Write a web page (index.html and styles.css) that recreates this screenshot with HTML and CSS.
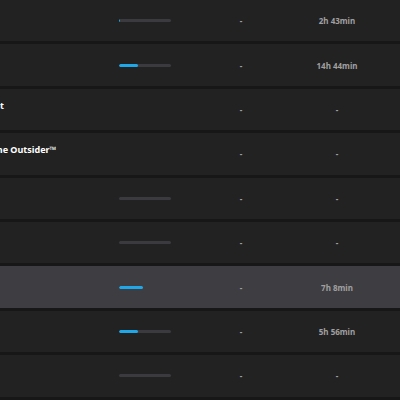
FILE: index.html
```html
<!DOCTYPE html>
<html lang="en">
<head>
  <meta charset="UTF-8" />
  <meta name="viewport" content="width=device-width, initial-scale=1" />
  <title>Library - Playtime</title>
  <link rel="stylesheet" href="styles.css">
</head>
<body>

  <div class="list">
    <div class="row">
      <div class="title"></div>
      <div class="bar-cell"><div class="track"><div class="fill" style="width: 2%"></div></div></div>
      <div class="dash">-</div>
      <div class="time">2h 43min</div>
    </div>

    <div class="row">
      <div class="title"></div>
      <div class="bar-cell"><div class="track"><div class="fill" style="width: 37%"></div></div></div>
      <div class="dash">-</div>
      <div class="time">14h 44min</div>
    </div>

    <div class="row">
      <div class="title"><span class="name">Ghost Recon® Breakpoint</span></div>
      <div class="bar-cell"></div>
      <div class="dash">-</div>
      <div class="time">-</div>
    </div>

    <div class="row">
      <div class="title"><span class="name">Dishonored®: Death of the Outsider™</span></div>
      <div class="bar-cell"></div>
      <div class="dash">-</div>
      <div class="time">-</div>
    </div>

    <div class="row">
      <div class="title"></div>
      <div class="bar-cell"><div class="track"><div class="fill" style="width: 0%"></div></div></div>
      <div class="dash">-</div>
      <div class="time">-</div>
    </div>

    <div class="row">
      <div class="title"></div>
      <div class="bar-cell"><div class="track"><div class="fill" style="width: 0%"></div></div></div>
      <div class="dash">-</div>
      <div class="time">-</div>
    </div>

    <div class="row active">
      <div class="title"></div>
      <div class="bar-cell"><div class="track"><div class="fill" style="width: 46%"></div></div></div>
      <div class="dash">-</div>
      <div class="time">7h 8min</div>
    </div>

    <div class="row">
      <div class="title"></div>
      <div class="bar-cell"><div class="track"><div class="fill" style="width: 37%"></div></div></div>
      <div class="dash">-</div>
      <div class="time">5h 56min</div>
    </div>

    <div class="row">
      <div class="title"></div>
      <div class="bar-cell"><div class="track"><div class="fill" style="width: 0%"></div></div></div>
      <div class="dash">-</div>
      <div class="time">-</div>
    </div>
  </div>

</body>
</html>
```

FILE: styles.css
```css
body {
  margin: 0;
  background: #171717;
  font-family: "Noto Sans", Arial, sans-serif;
  overflow: hidden;
  width: 400px;
  height: 400px;
}

.list {
  margin-left: -120px;
  width: 560px;
  display: flex;
  flex-direction: column;
  gap: 3px;
}

.row {
  height: 41.4px;
  background: #222222;
  display: grid;
  grid-template-columns: 239px 72px 100px 92px 1fr;
  align-items: center;
}

.row.active {
  background: #3e3d42;
}

.title {
  align-self: stretch;
  display: flex;
  align-items: center;
  padding-bottom: 8px;
  box-sizing: border-box;
  white-space: nowrap;
}

.name {
  color: #ffffff;
  font-weight: bold;
  font-size: 9px;
  margin-left: 8px;
}

.track {
  width: 52px;
  height: 3px;
  border-radius: 2px;
  background: #3b3b3f;
  overflow: hidden;
}

.row.active .track {
  background: #3e3d42;
}

.fill {
  height: 100%;
  background: #1ea8ea;
  border-radius: 2px;
}

.dash,
.time {
  text-align: center;
  color: #a0a0a0;
  font-weight: bold;
  font-size: 8px;
}
```
